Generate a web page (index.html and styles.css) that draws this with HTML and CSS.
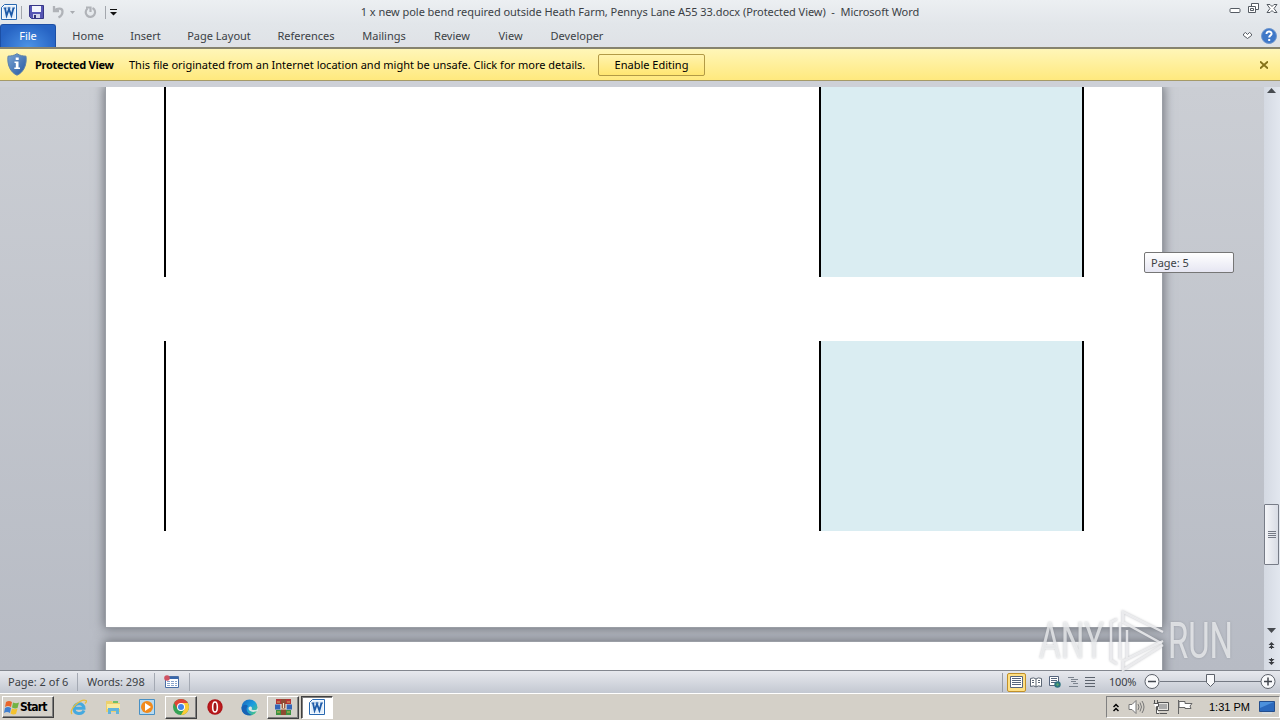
FILE: index.html
```
<!DOCTYPE html>
<html lang="en">
<head>
    <meta charset="UTF-8">
    <title>Microsoft Word</title>
    <link rel="stylesheet" href="styles.css">
</head>
<body>
    <svg class="defs" width="0" height="0">
        <defs>
            <linearGradient id="shield" x1="0" y1="0" x2="1" y2="1">
                <stop offset="0" stop-color="#7ba4d4"/>
                <stop offset="1" stop-color="#2458a0"/>
            </linearGradient>
            <linearGradient id="edge" x1="0" y1="0" x2="1" y2="1">
                <stop offset="0" stop-color="#1b62b8"/>
                <stop offset="0.5" stop-color="#1b9de0"/>
                <stop offset="1" stop-color="#58cf68"/>
            </linearGradient>
            <radialGradient id="opera">
                <stop offset="0" stop-color="#ef3b35"/>
                <stop offset="1" stop-color="#a80f14"/>
            </radialGradient>
            <symbol id="word" viewBox="0 0 16 16">
                <path d="M3.5 .5h12v15h-15v-12z" fill="#f4f9ff" stroke="#2868b0"/>
                <path d="M2 4l2-2h10v12H2z" fill="#e2eefa"/>
                <path d="M2.500 4h3M6.500 4h3M11.500 4h2.500" stroke="#1d5aa8"/>
                <path d="M4 4l1.600 7.500L8 5l2.400 6.500L12.500 4" fill="none" stroke="#1d5aa8" stroke-width="1.800"/>
            </symbol>
        </defs>
    </svg>

    <div class="window">
        <!-- title bar -->
        <div class="titlebar">
            <div class="quick">
                <svg class="q-word" width="16" height="16"><use href="#word"/></svg>
                <span class="sep"></span>
                <svg class="q-save" width="15" height="14" viewBox="0 0 15 14">
                    <path d="M.5 .5h14v13h-12l-2-2z" fill="#5656b4" stroke="#363686"/>
                    <path d="M3 1h9v6H3z" fill="#f3f5fc"/>
                    <path d="M4 9h7v4H4z" fill="#d4d6ec"/>
                    <path d="M5 10h2v3H5z" fill="#333377"/>
                </svg>
                <svg class="q-undo" width="13" height="13" viewBox="0 0 13 13">
                    <path d="M2 0v5h5M2.500 4.500C5 2 10.500 1.500 10.500 5.500c0 3-2 5-4 6" fill="none" stroke="#b0b3b8" stroke-width="2.300"/>
                </svg>
                <svg class="q-drop" width="5" height="3"><path d="M0 0h5L2.500 3z" fill="#a9acb1"/></svg>
                <svg class="q-redo" width="13" height="13" viewBox="0 0 13 13">
                    <path d="M8.500 2a4.700 4.700 0 1 1-5 .5M2 1.500h4.500V6" fill="none" stroke="#b0b3b8" stroke-width="2.200"/>
                </svg>
                <span class="sep last"></span>
                <svg class="q-more" width="7" height="7"><path d="M0 0h7v1H0zM0 3h7L3.500 6.500z" fill="#111"/></svg>
            </div>
            <div class="doc-title">1 x new pole bend required outside Heath Farm, Pennys Lane A55 33.docx (Protected View)&nbsp; - &nbsp;Microsoft Word</div>
            <div class="win-buttons">
                <svg width="12" height="12" viewBox="0 0 12 12"><rect x="1" y="6.500" width="10" height="4" rx="1" fill="#fff" stroke="#555b63"/></svg>
                <svg width="13" height="12" viewBox="0 0 13 12" fill="#fff" stroke="#555b63">
                    <path d="M4.500 1.500h7v6h-7z"/><path d="M1.500 4.500h7v6h-7z"/><path d="M3.500 6.500h3v2h-3z"/>
                </svg>
                <svg width="12" height="12" viewBox="0 0 12 12">
                    <path d="M1 2.500h3l2 2 2-2h3L8 6.500l3 4H8l-2-2-2 2H1l3-4z" fill="#fff" stroke="#555b63"/>
                </svg>
            </div>
        </div>

        <!-- ribbon tabs -->
        <div class="tabs">
            <div class="tab file">File</div>
            <div class="tab home">Home</div>
            <div class="tab insert">Insert</div>
            <div class="tab layout">Page Layout</div>
            <div class="tab refs">References</div>
            <div class="tab mailings">Mailings</div>
            <div class="tab review">Review</div>
            <div class="tab view">View</div>
            <div class="tab developer">Developer</div>
            <div class="tab-tools">
                <svg width="9" height="7" viewBox="0 0 9 7"><path d="M.5 2L2.500 .5l2 2 2-2L8.500 2v1.500l-4 3-4-3z" fill="#fff" stroke="#555b63"/></svg>
                <svg width="16" height="16" viewBox="0 0 16 16">
                    <circle cx="8" cy="8" r="7.500" fill="#3f78c8" stroke="#7199ce"/>
                    <path d="M5.500 6c0-3.500 5.500-3.200 5 0-.3 1.600-2.300 1.600-2.300 3.600M8.200 11v2" fill="none" stroke="#fff" stroke-width="2"/>
                </svg>
            </div>
        </div>

        <!-- protected view bar -->
        <div class="message-bar">
            <svg class="shield" width="20" height="23" viewBox="0 0 20 23">
                <path d="M10 .7c3 2 6 2.300 9 2.500 1 8-2 16-9 19C3 19.200 0 11.200 1 3.200 4 3 7 2.700 10 .7z" fill="url(#shield)" stroke="#5a80aa"/>
                <path d="M8.700 4.500h3v2.600h-3zM7.500 8.500h4v6h1.500V16H7.300v-1.500h1.500V10H7.500z" fill="#fff"/>
            </svg>
            <span class="msg-title">Protected View</span>
            <span class="msg-text">This file originated from an Internet location and might be unsafe. Click for more details.</span>
            <button class="enable">Enable Editing</button>
            <svg class="msg-close" width="8" height="8" viewBox="0 0 8 8"><path d="M0 .5l8 7M8 .5l-8 7" stroke="#857319" stroke-width="2"/></svg>
        </div>
        <div class="bar-gap"></div>

        <!-- document -->
        <div class="workspace">
            <div class="canvas">
                <div class="page page-current">
                    <div class="table-part"><div class="cell"></div></div>
                    <div class="table-part"><div class="cell"></div></div>
                </div>
                <div class="page page-next"></div>
            </div>
            <div class="scrollbar">
                <svg class="arrow-up" width="9" height="5"><path d="M0 5L4.500 0 9 5z" fill="#474b50"/></svg>
                <div class="thumb"><i></i><i></i><i></i><i></i></div>
                <svg class="arrow-down" width="9" height="5"><path d="M0 0h9L4.500 5z" fill="#474b50"/></svg>
                <svg class="page-up" width="7" height="7"><path d="M3.500 0L6.500 3h-6zM3.500 3L6.500 6h-6zM3 2h1v5H3z" fill="#393c41"/></svg>
                <svg class="page-down" width="7" height="7"><path d="M.5 1h6l-3 3zM.5 4h6l-3 3zM3 0h1v5H3z" fill="#393c41"/></svg>
            </div>
            <div class="page-tip">Page: 5</div>
            <div class="watermark">
                <svg width="220" height="66" viewBox="0 0 220 66">
                    <g class="mark">
                        <text x="2" y="50" textLength="65" lengthAdjust="spacingAndGlyphs">ANY</text>
                        <text x="131" y="50" textLength="65" lengthAdjust="spacingAndGlyphs">RUN</text>
                    </g>
                    <g class="mark-lines">
                        <path d="M80 11l-6 3v38l6 4"/>
                        <path d="M83 15v36"/>
                        <path d="M126 24L86 4v10l38 21"/>
                        <path d="M90 50V22"/>
                        <path d="M126 33L86 53v9l40-25"/>
                    </g>
                </svg>
            </div>
        </div>

        <!-- status bar -->
        <div class="statusbar">
            <div class="st-page">Page: 2 of 6</div>
            <div class="st-words">Words: 298</div>
            <div class="st-macro">
                <svg width="15" height="13" viewBox="0 0 15 13">
                    <path d="M1.500 1.500h13v11h-13z" fill="#fff" stroke="#4a6fa5"/>
                    <path d="M2 2h12v2H2z" fill="#3867ac"/>
                    <path d="M3 6.500h10M3 8.500h10M3 10.500h10" stroke="#8aa5cc" stroke-dasharray="3 1"/>
                    <circle cx="3" cy="3" r="2.800" fill="#cf5262"/>
                </svg>
            </div>
            <div class="views">
                <div class="view-on">
                    <svg width="13" height="12" viewBox="0 0 13 12"><path d="M.5 .5h12v11H.5z" fill="#fff" stroke="#56657d"/><path d="M2 2.500h9M2 4.500h9M2 6.500h9M2 8.500h9" stroke="#56657d"/></svg>
                </div>
                <svg width="12" height="11" viewBox="0 0 12 11"><path d="M.5 1.500Q4 0 6 2q2-2 5.500-.5v8Q8 8 6 10q-2-2-5.500-.5zM6 2v8" fill="#fff" stroke="#5c6673"/><path d="M2 3.500h2M2 5.500h2M8 3.500h2M8 5.500h2" stroke="#5c6673"/></svg>
                <svg width="12" height="12" viewBox="0 0 12 12"><path d="M.5 .5h9v9h-9z" fill="#fff" stroke="#56657d"/><path d="M2 2.500h6M2 4.500h6M2 6.500h4" stroke="#56657d"/><circle cx="8.500" cy="8.500" r="3.200" fill="#2c7380"/><path d="M7 8l2-1 1 2-2 1z" fill="#59a86a"/></svg>
                <svg width="10" height="10" viewBox="0 0 10 10"><path d="M0 .5h6M3 2.500h7M3 4.500h5M5 6.500h5M1 9.500h9" stroke="#7b838e"/></svg>
                <svg width="10" height="10" viewBox="0 0 10 10"><path d="M0 .5h10M0 3.500h10M0 6.500h10M0 9.500h10" stroke="#5c636d"/></svg>
            </div>
            <div class="zoom-value">100%</div>
            <div class="zoom">
                <svg width="136" height="18" viewBox="0 0 136 18">
                    <path d="M16 8.500h104" stroke="#747983"/>
                    <g fill="#f8f9fb" stroke="#5d626b">
                        <circle cx="8" cy="8.500" r="7"/>
                        <circle cx="124" cy="8.500" r="7"/>
                        <path d="M62.500 1.500h8v8l-4 4-4-4z"/>
                    </g>
                    <path d="M4 8.500h8M120 8.500h8M124 4.500v8" stroke="#41464e" stroke-width="1.500"/>
                </svg>
            </div>
        </div>

        <!-- taskbar -->
        <div class="taskbar">
            <div class="start">
                <svg width="15" height="15" viewBox="0 0 15 15">
                    <path d="M2 2q3-2 6 0L7 7Q4 5 1 7z" fill="#e8652c"/>
                    <path d="M9 2.500q3 1.500 6 0L13.500 8Q11 9 8 7.500z" fill="#72b344"/>
                    <path d="M1 8q3-2 6 0l-1 5q-3-2-6 0z" fill="#3f7fd0"/>
                    <path d="M8 8.500q3 1.500 5.500 0L12 14q-3 1-5.500-.5z" fill="#f4c22e"/>
                </svg>
                <span>Start</span>
            </div>
            <div class="task ie">
                <svg width="17" height="17" viewBox="0 0 17 17">
                    <path d="M14 11.500C12 16 4 15.500 4 9.500S14 3 14 9.300H5" fill="none" stroke="#45a9df" stroke-width="3"/>
                    <path d="M2 15C-2 11 11-1 16 1.500c1 .8 0 2-1 3" fill="none" stroke="#e7bd3c" stroke-width="1.300"/>
                </svg>
            </div>
            <div class="task">
                <svg width="17" height="16" viewBox="0 0 17 16">
                    <path d="M1 2h6l1 2h7v9H1z" fill="#ecd06c"/>
                    <path d="M2 5h13v5H2z" fill="#f8eaa0"/>
                    <path d="M3 15V9h11v6h-3v-3H6v3z" fill="#62b4db"/>
                    <path d="M8 2h5v2H8z" fill="#6fbf6b"/>
                </svg>
            </div>
            <div class="task">
                <svg width="16" height="16" viewBox="0 0 16 16">
                    <path d="M.5 .5h15v15H.5z" fill="#b8daf0" stroke="#4890c4"/>
                    <circle cx="8" cy="8" r="6" fill="#f18a1c"/>
                    <path d="M6 4l6 4-6 4z" fill="#fff"/>
                </svg>
            </div>
            <div class="task open">
                <svg width="16" height="16" viewBox="0 0 16 16">
                    <circle cx="8" cy="8" r="8" fill="#35a355"/>
                    <path d="M1.100 4A8 8 0 0 1 14.900 4H8L4.500 10z" fill="#e04436"/>
                    <path d="M8 4h6.900A8 8 0 0 1 8 16l3.500-6z" fill="#fccb35"/>
                    <circle cx="8" cy="8" r="4" fill="#fff"/>
                    <circle cx="8" cy="8" r="3" fill="#4285e8"/>
                </svg>
            </div>
            <div class="task">
                <svg width="16" height="16" viewBox="0 0 16 16">
                    <circle cx="8" cy="8" r="7.700" fill="url(#opera)"/>
                    <ellipse cx="8" cy="8" rx="2.300" ry="5" fill="#9e1418" stroke="#fff" stroke-width="1.500"/>
                </svg>
            </div>
            <div class="task">
                <svg width="17" height="17" viewBox="0 0 17 17">
                    <circle cx="8.500" cy="8.500" r="8" fill="url(#edge)"/>
                    <path d="M7 7c-3 3-1 8 4 9C4 17.500 0 13 .6 8.500 2 5 5 5 7 7z" fill="#1762b5"/>
                    <path d="M17 8.500c-.5 3-4 3-6.500 2C12 8 9.500 6.500 8 8c-2 3 2 6 6.500 4.500L17 12z" fill="#d8e6e2"/>
                </svg>
            </div>
            <div class="task open">
                <svg width="17" height="16" viewBox="0 0 17 16">
                    <path d="M1 0h15v5H1z" fill="#b53436"/>
                    <path d="M0 5.500h17v5H0z" fill="#3565b7"/>
                    <path d="M1 11h15v5H1z" fill="#3d9240"/>
                    <path d="M6 0h5v16H6z" fill="#8f4b32"/>
                    <path d="M6 5v5h5V5M8.500 4v5" fill="none" stroke="#f2ead0" stroke-width="1.200"/>
                    <path d="M2 3h3M12 3h3M2 13h3M12 13h3" stroke="#d6b359"/>
                </svg>
            </div>
            <div class="task active"><svg width="16" height="16"><use href="#word"/></svg></div>

            <div class="tray">
                <svg class="t-up" width="6" height="9" viewBox="0 0 6 9"><path d="M.5 4L3 1.500 5.500 4M.5 8L3 5.500 5.500 8" fill="none" stroke="#000" stroke-width="1.500"/></svg>
                <svg class="t-vol" width="17" height="14" viewBox="0 0 17 14">
                    <path d="M1 4.500h3l4-4v13l-4-4H1z" fill="#fff" stroke="#777"/>
                    <path d="M10 4q2 3 0 6M12 2.500q3 4.500 0 9M14 1q4 6 0 12" fill="none" stroke="#777"/>
                </svg>
                <svg class="t-net" width="16" height="15" viewBox="0 0 16 15">
                    <path d="M4.500 2.500h11v8h-11zM7 13.500h7" fill="#e7e6e2" stroke="#555"/>
                    <path d="M6 4h8v5H6z" fill="#aaa"/>
                    <path d="M1.500 0v3M4.500 0v3M.5 3.500h5v3h-2v7h3" fill="#fff" stroke="#555"/>
                </svg>
                <svg class="t-flag" width="17" height="14" viewBox="0 0 17 14">
                    <path d="M1.500 0v14M2 1.500h6v2h7l-2 2.500 1 2.500H8v-1H2z" fill="#fff" stroke="#666"/>
                </svg>
                <span class="clock">1:31 PM</span>
                <svg class="t-desk" width="16" height="13" viewBox="0 0 16 13">
                    <path d="M.5 .5h15v10H.5z" fill="#2b69bd" stroke="#244e8d"/>
                    <path d="M1 1h14L1 7z" fill="#4d91dc"/>
                    <path d="M3 12h10" stroke="#d6e4f2"/>
                </svg>
            </div>
        </div>
    </div>
</body>
</html>
```
FILE: styles.css
```
* {
    margin: 0;
    padding: 0;
    box-sizing: border-box;
}
body {
    font-family: "Noto Sans", "Open Sans", sans-serif;
    font-size: 11px;
    color: #3b3f45;
    overflow: hidden;
}
svg {
    display: block;
    flex-shrink: 0;
}
.defs {
    position: absolute;
}
.window {
    width: 1280px;
    height: 720px;
    display: flex;
    flex-direction: column;
    overflow: hidden;
}

/* title bar */
.titlebar {
    height: 24px;
    display: flex;
    background: linear-gradient(#eceff2, #e2e6ea);
}
.quick {
    width: 320px;
    display: flex;
    align-items: center;
    padding-left: 1px;
}
.sep {
    width: 1px;
    height: 13px;
    margin: 0 7px 0 4px;
    background: #a3a7ad;
}
.sep.last {
    margin: 0 4px 0 8px;
}
.q-undo {
    margin-left: 8px;
}
.q-drop {
    margin-left: 5px;
}
.q-redo {
    margin-left: 9px;
}
.doc-title {
    width: 640px;
    line-height: 24px;
    text-align: center;
    white-space: nowrap;
    letter-spacing: -0.045px;
}
.win-buttons {
    width: 320px;
    display: flex;
    justify-content: flex-end;
    gap: 6px;
    padding: 2px 2px 0 0;
}

/* ribbon tabs */
.tabs {
    height: 23px;
    display: flex;
    background: linear-gradient(#e2e6ea, #dfe2e6);
}
.tab {
    line-height: 24px;
    text-align: center;
    white-space: nowrap;
}
.file {
    width: 56px;
    margin-right: 3px;
    color: #fff;
    border: 1px solid #1c4fa5;
    border-bottom: none;
    border-radius: 3px 3px 0 0;
    background: radial-gradient(ellipse at 50% 100%, #4c93e6, #2764c4 75%);
    line-height: 22px;
}
.home {
    width: 58px;
}
.insert {
    width: 57px;
}
.layout {
    width: 90px;
}
.refs {
    width: 84px;
}
.mailings {
    width: 72px;
}
.review {
    width: 64px;
}
.view {
    width: 53px;
}
.developer {
    width: 80px;
}
.tab-tools {
    margin-left: auto;
    display: flex;
    align-items: center;
    gap: 9px;
    padding-right: 3px;
}

/* protected view bar */
.message-bar {
    height: 34px;
    display: flex;
    align-items: center;
    padding: 0 12px 0 7px;
    color: #000;
    border-top: 2px solid #86836e;
    border-bottom: 1px solid #a59a68;
    background: linear-gradient(#fff6b8, #ffe97e);
}
.msg-title {
    width: 95px;
    padding-left: 8px;
    font-weight: bold;
    white-space: nowrap;
    letter-spacing: -0.3px;
}
.msg-text {
    width: 476px;
    padding-left: 7px;
    white-space: nowrap;
}
.enable {
    width: 107px;
    height: 22px;
    font: inherit;
    color: #000;
    border: 1px solid #b29a46;
    border-radius: 2px;
    background: linear-gradient(#fff3ae, #ffe671);
}
.msg-close {
    margin-left: auto;
}
.bar-gap {
    height: 6px;
    background: #cdd0d7;
}

/* document */
.workspace {
    position: relative;
    height: 583px;
    display: flex;
    background: linear-gradient(#cbced4, #b7bbc4);
}
.canvas {
    width: 1264px;
    height: 583px;
    padding-left: 106px;
    overflow: hidden;
}
.page {
    width: 1056px;
    background: #fff;
    box-shadow: 0 0 0 1px #9b9fa6, 0 0 10px 2px #70747b;
}
.page-current {
    height: 540px;
    padding-left: 58px;
    margin-bottom: 15px;
}
.page-next {
    height: 100px;
}
.table-part {
    width: 920px;
    height: 190px;
    display: flex;
    justify-content: flex-end;
    border-left: 2px solid #000;
    margin-bottom: 64px;
}
.cell {
    width: 265px;
    background: #daedf2;
    border-left: 2px solid #000;
    border-right: 2px solid #000;
}
.scrollbar {
    width: 16px;
    display: flex;
    flex-direction: column;
    align-items: center;
    padding-right: 1px;
    background: linear-gradient(90deg, #d4d9e2, #e2e7ef);
}
.arrow-up {
    margin-top: 1px;
}
.thumb {
    width: 15px;
    height: 61px;
    margin-top: 411px;
    display: flex;
    flex-direction: column;
    align-items: center;
    justify-content: center;
    gap: 1px;
    border: 1px solid #777c87;
    border-radius: 1px;
    background: linear-gradient(90deg, #f4f5f8, #d8dce5);
}
.thumb i {
    width: 8px;
    height: 1px;
    background: #747985;
}
.arrow-down {
    margin-top: 63px;
}
.page-up {
    margin-top: 9px;
}
.page-down {
    margin-top: 9px;
}
.page-tip {
    position: absolute;
    left: 1144px;
    top: 165px;
    width: 90px;
    height: 21px;
    padding-left: 6px;
    line-height: 20px;
    border: 1px solid #767676;
    border-radius: 2px;
    background: linear-gradient(#fff, #e6e6f2);
}
.watermark {
    position: absolute;
    left: 1037px;
    top: 521px;
    filter: drop-shadow(0 0 1px rgba(110, 114, 122, 0.5));
}
.mark {
    font-family: Roboto, sans-serif;
    font-size: 50px;
    fill: #f0f1f3;
    fill-opacity: 0.75;
}
.mark-lines {
    fill: none;
    stroke: #eeeff1;
    stroke-opacity: 0.85;
    stroke-width: 2.5px;
}

/* status bar */
.statusbar {
    height: 23px;
    display: flex;
    align-items: center;
    border-top: 1px solid #83878f;
    background: linear-gradient(#e7e9ee, #c3c8d1);
}
.st-page {
    width: 78px;
    padding-left: 8px;
    line-height: 18px;
    white-space: nowrap;
    border-right: 1px solid #a4a9b3;
}
.st-words {
    width: 77px;
    padding-left: 9px;
    line-height: 18px;
    white-space: nowrap;
    border-right: 1px solid #a4a9b3;
}
.st-macro {
    width: 35px;
    height: 18px;
    padding: 2px 0 0 9px;
    border-right: 1px solid #a4a9b3;
}
.views {
    margin-left: auto;
    width: 93px;
    display: flex;
    align-items: center;
    justify-content: space-between;
    padding-left: 4px;
    height: 19px;
    border-left: 1px solid #979ca6;
}
.view-on {
    width: 19px;
    height: 19px;
    margin-right: -3px;
    padding: 2px;
    border: 1px solid #c0902a;
    border-radius: 2px;
    background: #ffe084;
}
.zoom-value {
    width: 49px;
    padding-left: 14px;
    line-height: 14px;
    padding-bottom: 1px;
    letter-spacing: -0.2px;
}
.zoom {
    width: 136px;
}

/* taskbar */
.taskbar {
    height: 27px;
    display: flex;
    align-items: center;
    border-top: 1px solid #fff;
    background: #d4d0c8;
}
.start {
    width: 52px;
    height: 22px;
    margin: 0 9px 0 2px;
    display: flex;
    align-items: center;
    color: #000;
    font: bold 12px "DejaVu Sans Condensed", "DejaVu Sans", sans-serif;
    border: 1px solid;
    border-color: #fff #404040 #404040 #fff;
    box-shadow: inset -1px -1px #808080;
}
.start svg {
    margin-left: 1px;
}
.start span {
    margin-left: 1px;
    letter-spacing: -0.8px;
}
.task {
    width: 32px;
    height: 23px;
    margin-right: 2px;
    display: flex;
    align-items: center;
    justify-content: center;
}
.ie {
    padding-right: 1px;
}
.open {
    border: 1px solid;
    border-color: #fff #404040 #404040 #fff;
    box-shadow: inset -1px -1px #808080;
}
.active {
    border: 1px solid;
    border-color: #404040 #fff #fff #404040;
    box-shadow: inset 1px 1px #808080;
    background: #fff;
}
.tray {
    width: 174px;
    height: 22px;
    margin-left: auto;
    display: flex;
    align-items: center;
    padding-left: 6px;
    color: #000;
    border: 1px solid;
    border-color: #808080 #fff #fff #808080;
}
.t-vol {
    margin-left: 9px;
}
.t-net {
    margin-left: 8px;
}
.t-flag {
    margin-left: 8px;
}
.clock {
    width: 51px;
    padding-left: 15px;
    white-space: nowrap;
    font: 11px "Liberation Sans", sans-serif;
}
.t-desk {
    margin-left: auto;
    margin-right: 4px;
}
```
